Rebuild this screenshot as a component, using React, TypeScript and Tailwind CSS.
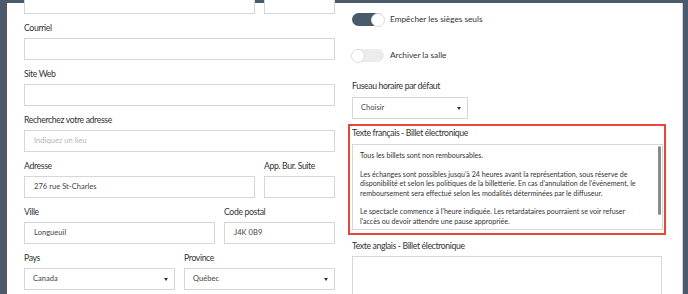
import React from "react";

const font = { fontFamily: "Lato, 'Open Sans', sans-serif" };

function Label({ children }: { children: React.ReactNode }) {
  return (
    <div className="h-[12px] text-[8.7px] tracking-[-0.37px] leading-[12px] text-[#333] whitespace-nowrap">
      {children}
    </div>
  );
}

function Input({ value, placeholder, className = "" }: { value?: string; placeholder?: string; className?: string }) {
  return (
    <div
      className={`h-[22px] border border-[#d6d6d6] bg-white pl-[9px] flex items-center text-[7.5px] tracking-[0.05px] whitespace-nowrap ${
        value ? "text-[#444]" : "text-[#b5b5b5]"
      } ${className}`}
    >
      {value || placeholder}
    </div>
  );
}

function Select({ value, className = "" }: { value: string; className?: string }) {
  return (
    <div
      className={`h-[22px] border border-[#d6d6d6] bg-white pl-[8px] pr-[6px] flex items-center justify-between text-[7.5px] tracking-[0.05px] text-[#444] ${className}`}
    >
      <span>{value}</span>
      <span className="w-0 h-0 border-l-[2.5px] border-r-[2.5px] border-t-[3px] border-l-transparent border-r-transparent border-t-[#333]" />
    </div>
  );
}

function Field({ label, children, className = "" }: { label: string; children: React.ReactNode; className?: string }) {
  return (
    <div className={`flex flex-col gap-[4px] ${className}`}>
      <Label>{label}</Label>
      {children}
    </div>
  );
}

function Toggle({ on, label }: { on: boolean; label: string }) {
  return (
    <div className="flex items-center gap-[6px] h-[13px]">
      <div
        className={`relative w-[32px] h-[13px] rounded-full ${on ? "bg-[#4a5a6b]" : "bg-[#ececec]"}`}
      >
        <div
          className={`absolute top-[-0.5px] w-[14px] h-[14px] rounded-full bg-white border border-[#dcdcdc] ${
            on ? "right-[-1px]" : "left-[-1px]"
          }`}
        />
      </div>
      <span className="text-[8.3px] tracking-[-0.02px] text-[#333] whitespace-nowrap">{label}</span>
    </div>
  );
}

const frText = [
  "Tous les billets sont non remboursables.",
  "",
  "Les échanges sont possibles jusqu'à 24 heures avant la représentation, sous réserve de",
  "disponibilité et selon les politiques de la billetterie. En cas d'annulation de l'événement, le",
  "remboursement sera effectué selon les modalités déterminées par le diffuseur.",
  "",
  "Le spectacle commence à l'heure indiquée. Les retardataires pourraient se voir refuser",
  "l'accès ou devoir attendre une pause appropriée.",
];

export default function App() {
  return (
    <div style={font} className="w-[688px] h-[294px] overflow-hidden bg-[#4b5b6c] pl-[7px] pt-[3px] pr-[5px]">
      <div className="h-[300px] bg-white border-r border-[#cfd3d8] flex pl-[17px] gap-[17px]">
        {/* Left column */}
        <div className="w-[311px] flex flex-col gap-[8px] mt-[-11px]">
          <div className="flex gap-[9px]">
            <Input className="flex-1" />
            <Input className="w-[71px]" />
          </div>
          <Field label="Courriel">
            <Input />
          </Field>
          <Field label="Site Web">
            <Input />
          </Field>
          <Field label="Recherchez votre adresse">
            <Input placeholder="Indiquez un lieu" />
          </Field>
          <div className="flex gap-[9px]">
            <Field label="Adresse" className="flex-1">
              <Input value="276 rue St-Charles" />
            </Field>
            <Field label="App. Bur. Suite" className="w-[71px]">
              <Input />
            </Field>
          </div>
          <div className="flex gap-[9px]">
            <Field label="Ville" className="flex-1">
              <Input value="Longueuil" />
            </Field>
            <Field label="Code postal" className="w-[111px]">
              <Input value="J4K 0B9" />
            </Field>
          </div>
          <div className="flex gap-[9px]">
            <Field label="Pays" className="flex-1">
              <Select value="Canada" />
            </Field>
            <Field label="Province" className="flex-1">
              <Select value="Québec" />
            </Field>
          </div>
        </div>

        {/* Right column */}
        <div className="w-[310px] flex flex-col">
          <div className="mt-[10px]">
            <Toggle on label="Empêcher les sièges seuls" />
          </div>
          <div className="mt-[23px]">
            <Toggle on={false} label="Archiver la salle" />
          </div>
          <div className="mt-[18px] flex flex-col gap-[5px]">
            <Label>Fuseau horaire par défaut</Label>
            <Select value="Choisir" className="w-[116px]" />
          </div>
          <div className="mt-[5px] mx-[-4px] border-2 border-[#e2483a] pl-[2px] pr-[1px] pt-[1px] pb-[3px] flex flex-col gap-[5px]">
            <Label>Texte français - Billet électronique</Label>
            <div className="relative h-[86px] border border-[#d6d6d6] pl-[7px] pt-[6px] overflow-hidden">
              <div className="text-[7.1px] leading-[9.4px] text-[#333] whitespace-nowrap">
                {frText.map((line, i) => (
                  <div key={i} className="h-[9.4px]">
                    {line}
                  </div>
                ))}
              </div>
              <div className="absolute right-[1px] top-[1px] w-[3px] h-[69px] rounded-full bg-[#8a8a8a]" />
            </div>
          </div>
          <div className="mt-[5px] flex flex-col gap-[4px]">
            <Label>Texte anglais - Billet électronique</Label>
            <div className="h-[60px] border border-[#d6d6d6]" />
          </div>
        </div>
      </div>
    </div>
  );
}
